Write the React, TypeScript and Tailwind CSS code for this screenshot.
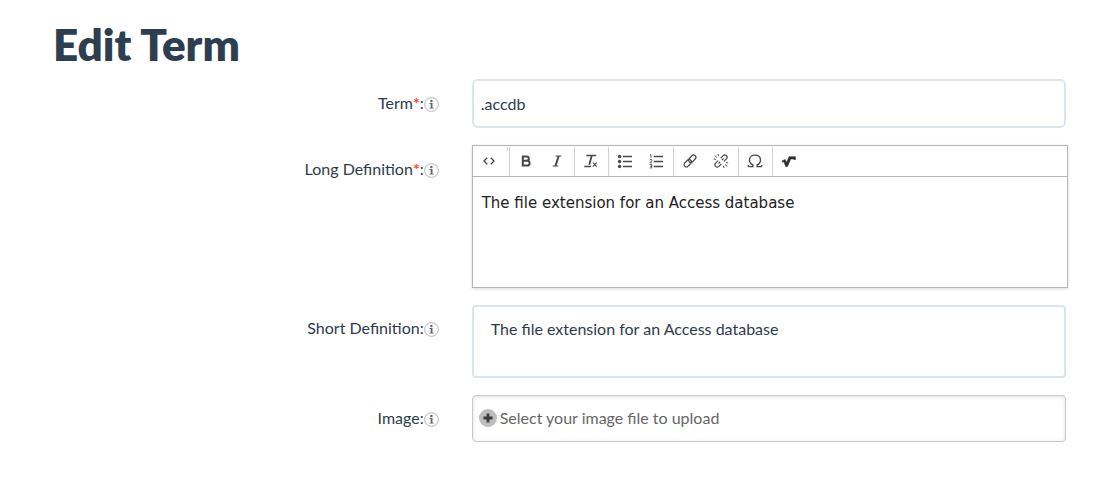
import type { ReactNode } from "react";

function InfoIcon() {
  return (
    <svg viewBox="0 0 15 15" className="size-[15px]" aria-hidden="true">
      <circle cx="7.5" cy="7.5" r="6.9" fill="#fdfdfd" stroke="#b0b0b0" strokeWidth="0.9" />
      <circle cx="7.4" cy="4" r="1.2" fill="#606468" />
      <path d="M5.5 6h3v4.7h1.2v.9H5.4v-.9h1.3V6.900H5.500z" fill="#606468" />
    </svg>
  );
}

type RowProps = {
  id: string;
  label: string;
  required?: boolean;
  labelClass: string;
  children: ReactNode;
};

function Row({ id, label, required, labelClass, children }: RowProps) {
  return (
    <div className="grid grid-cols-[38%_1fr] gap-x-[33px]">
      <div className={`flex items-start justify-end ${labelClass}`}>
        <label htmlFor={id} className="text-[16px] leading-6">
          {label}
          {required && <span className="font-bold text-[#e8501e]">*</span>}:
        </label>
        <button type="button" aria-label={`About ${label}`} className="mt-[6px]">
          <InfoIcon />
        </button>
      </div>
      {children}
    </div>
  );
}

function Tool({ name, children }: { name: string; children: ReactNode }) {
  return (
    <button type="button" aria-label={name} className="flex h-[27px] w-[31px] items-center justify-center">
      <svg
        viewBox="0 0 16 16"
        className="size-4"
        fill="none"
        stroke="#484848"
        strokeWidth="1.3"
        aria-hidden="true"
      >
        {children}
      </svg>
    </button>
  );
}

function Group({ last, children }: { last?: boolean; children: ReactNode }) {
  return (
    <div className={last ? "flex pl-px" : "flex border-r border-[#d1d1d1] px-px"}>{children}</div>
  );
}

function Toolbar() {
  return (
    <div role="toolbar" aria-label="Formatting" className="flex h-[31px] border-b border-[#b6b6b6] pt-px">
      <div className="flex border-r border-[#d1d1d1] px-px">
        <Tool name="Source">
          <path d="M6.200 4.800 3 8l3.200 3.200M9.800 4.800 13 8l-3.200 3.200" />
        </Tool>
        <span className="h-1 w-[3px] border-r border-[#d1d1d1]" />
      </div>
      <Group>
        <Tool name="Bold">
          <path d="M4.800 3.400h3.800a2.200 2.200 0 0 1 0 4.400H4.800zM4.800 7.800h4.400a2.400 2.400 0 0 1 0 4.800H4.800z" strokeWidth="2" />
        </Tool>
        <Tool name="Italic">
          <path d="M6.500 3h5.800M3.700 13h5.600" strokeWidth="1.200" />
          <path d="M9.700 3 6.400 13" strokeWidth="2" />
        </Tool>
      </Group>
      <Group>
        <Tool name="Remove Format">
          <path d="M3.300 2.500h9.900M1.300 13.500h6.600" strokeWidth="1.400" />
          <path d="M8.700 2.500 6.300 11.700" strokeWidth="1.800" />
          <path d="m9.800 9.700 4 4m0-4-4 4" strokeWidth="1.100" />
        </Tool>
      </Group>
      <Group>
        <Tool name="Bulleted List">
          <path d="M6 3.500h9M6 8.500h9M6 13.500h9" strokeWidth="1.400" />
          <g fill="#484848" stroke="none">
            <circle cx="2.600" cy="3.500" r="1.700" />
            <circle cx="2.600" cy="8.500" r="1.700" />
            <circle cx="2.600" cy="13.500" r="1.700" />
          </g>
        </Tool>
        <Tool name="Numbered List">
          <path d="M5.700 3.500H15M5.700 8.500H15M5.700 13.500H15" strokeWidth="1.400" />
          <path
            d="M2 2.100l1-.6v3.200M1.800 6.600h2v1.200l-1.900 2h2.100M1.800 11.500h2v3.400h-2M2.200 13.200h1.600"
            strokeWidth="0.900"
          />
        </Tool>
      </Group>
      <Group>
        <Tool name="Link">
          <g transform="rotate(-45 8 8)" strokeWidth="1.200">
            <rect x="0.600" y="5.700" width="8.400" height="4.600" rx="2.300" />
            <rect x="7" y="5.700" width="8.400" height="4.600" rx="2.300" />
          </g>
        </Tool>
        <Tool name="Unlink">
          <g transform="rotate(-45 8 8)" strokeWidth="1.200">
            <path d="M6.200 5.700H2.700a2.300 2.300 0 0 0 0 4.600h3.500M9.800 5.700h3.500a2.300 2.300 0 0 1 0 4.600H9.800" />
            <path d="M4.500 8h2.200M9.300 8h2.200" />
          </g>
          <path
            d="M1.800 2.600 4 4.600M5 1l.6 2.300M.8 6l2.200.4M14.200 13.400 12 11.400M11 15l-.6-2.300M15.200 10l-2.200-.4"
            strokeWidth="1"
          />
        </Tool>
      </Group>
      <Group>
        <Tool name="Insert Special Character">
          <path
            d="M1.400 13.600h4.500v-1.600C3.700 11 2.500 9.300 2.500 7 2.500 4 4.800 2.100 8 2.100s5.500 1.900 5.500 4.900c0 2.300-1.200 4-3.400 5v1.600h4.500M1.400 13.800v-1.800M14.600 13.800v-1.800"
            strokeWidth="1.400"
          />
        </Tool>
      </Group>
      <Group last>
        <Tool name="Insert Equation">
          <path
            d="M1.200 7.800 4.200 6.600 5.800 9.600 8 3.800H14.400V6.600H13L12.400 5.900H9.700L6.500 13.400H4.700L3 8.600 1.600 9.200z"
            fill="#2b2b2b"
            stroke="#2b2b2b"
            strokeWidth="0.600"
            strokeLinejoin="round"
          />
        </Tool>
      </Group>
    </div>
  );
}

export default function App() {
  return (
    <main className="bg-white pr-10 pb-9 pl-[53px] font-['Lato',sans-serif] text-[#2d3b4e]">
      <h1 className="pt-4 pb-[7px] text-[44px] leading-[56px] font-extrabold text-[#2d3e50]">
        Edit Term
      </h1>
      <form className="flex flex-col gap-[17px]">
        <Row id="term" label="Term" required labelClass="pt-3">
          <input
            id="term"
            type="text"
            defaultValue=".accdb"
            className="mr-[2px] h-[49px] rounded-md border-2 border-[#dce4ec] px-[7px] text-[16px] outline-none"
          />
        </Row>
        <Row id="long" label="Long Definition" required labelClass="pt-3">
          <div className="flex flex-col border border-[#b6b6b6] shadow-[0_1px_3px_rgba(0,0,0,0.15)]">
            <Toolbar />
            <textarea
              id="long"
              defaultValue="The file extension for an Access database"
              className="h-[110px] resize-none px-[9px] py-4 font-['DejaVu_Sans',sans-serif] text-[15px] leading-5 text-[#222222] outline-none"
            />
          </div>
        </Row>
        <Row id="short" label="Short Definition" labelClass="pt-[11px]">
          <textarea
            id="short"
            defaultValue="The file extension for an Access database"
            className="mr-[2px] h-[73px] resize-none rounded-[4px] border-2 border-[#dce4ec] px-[17px] py-[10px] text-[16px] leading-6 outline-none"
          />
        </Row>
        <Row id="image" label="Image" labelClass="pt-[11px]">
          <label
            htmlFor="image"
            className="relative mr-[2px] flex h-[47px] items-center gap-[3px] rounded-[4px] border border-[#c8c8c8] px-[6px] pb-[2px] text-[16px] text-[#666666] shadow-[inset_0_1px_4px_rgba(0,0,0,0.12)]"
          >
            <input id="image" type="file" className="sr-only" />
            <svg viewBox="0 0 18 18" className="size-[18px]" aria-hidden="true">
              <circle cx="9" cy="9" r="9" fill="#bdbdbd" />
              <path d="M9 4.500v9M4.500 9h9" stroke="#3c3c3c" strokeWidth="2.800" />
            </svg>
            Select your image file to upload
          </label>
        </Row>
      </form>
    </main>
  );
}
